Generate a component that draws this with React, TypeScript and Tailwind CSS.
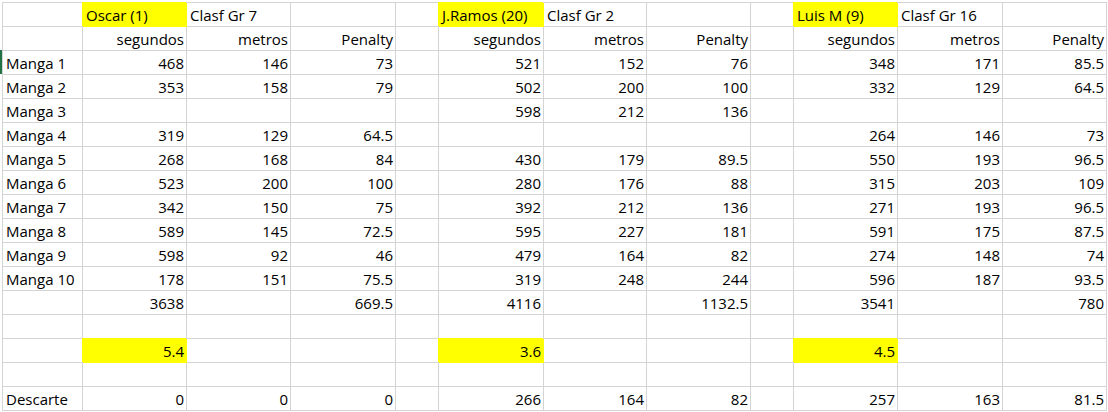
const widths = [
  "w-[80px]",
  "w-[104px]",
  "w-[104px]",
  "w-[105px]",
  "w-[43px]",
  "w-[105px]",
  "w-[103px]",
  "w-[104px]",
  "w-[43px]",
  "w-[104px]",
  "w-[105px]",
  "w-[104px]",
];

const header = ["", "Oscar (1)", "Clasf Gr 7", "", "", "J.Ramos (20)", "Clasf Gr 2", "", "", "Luis M (9)", "Clasf Gr 16", ""];
const units = ["", "segundos", "metros", "Penalty", "", "segundos", "metros", "Penalty", "", "segundos", "metros", "Penalty"];

// segundos / metros / penalty for each player
const mangas: string[][] = [
  ["468", "146", "73", "521", "152", "76", "348", "171", "85.5"],
  ["353", "158", "79", "502", "200", "100", "332", "129", "64.5"],
  ["", "", "", "598", "212", "136", "", "", ""],
  ["319", "129", "64.5", "", "", "", "264", "146", "73"],
  ["268", "168", "84", "430", "179", "89.5", "550", "193", "96.5"],
  ["523", "200", "100", "280", "176", "88", "315", "203", "109"],
  ["342", "150", "75", "392", "212", "136", "271", "193", "96.5"],
  ["589", "145", "72.5", "595", "227", "181", "591", "175", "87.5"],
  ["598", "92", "46", "479", "164", "82", "274", "148", "74"],
  ["178", "151", "75.5", "319", "248", "244", "596", "187", "93.5"],
];

const spread = (label: string, v: string[]) => [label, v[0], v[1], v[2], "", v[3], v[4], v[5], "", v[6], v[7], v[8]];

const yellowCols = [1, 5, 9];

type Row = { cells: string[]; left?: boolean; yellow?: boolean; mark?: boolean };

const rows: Row[] = [
  { cells: header, left: true, yellow: true },
  { cells: units },
  ...mangas.map((m, i) => ({ cells: spread(`Manga ${i + 1}`, m), mark: i === 0 })),
  { cells: spread("", ["3638", "", "669.5", "4116", "", "1132.5", "3541", "", "780"]) },
  { cells: spread("", ["", "", "", "", "", "", "", "", ""]) },
  { cells: spread("", ["5.4", "", "", "3.6", "", "", "4.5", "", ""]), yellow: true },
  { cells: spread("", ["", "", "", "", "", "", "", "", ""]) },
  { cells: spread("Descarte", ["0", "0", "0", "266", "164", "82", "257", "163", "81.5"]) },
];

function Cell({ text, idx, left, yellow }: { text: string; idx: number; left?: boolean; yellow?: boolean }) {
  const alignLeft = left || idx === 0;
  return (
    <div
      className={`${widths[idx]} h-[24px] shrink-0 flex items-end border-r border-b whitespace-nowrap pb-px ${
        yellow ? "bg-[#ffff00] border-[#ffff00] shadow-[-1px_-1px_0_0_#ffff00]" : "border-[#d4d4d4]"
      } ${alignLeft ? "justify-start pl-[3px]" : "justify-end pr-[2px]"}`}
    >
      {text}
    </div>
  );
}

export default function App() {
  return (
    <main className="w-[1108px] h-[412px] overflow-hidden bg-white pt-[2px] text-black text-[15px] leading-[20px] font-['Open_Sans',sans-serif]">
      <div className="ml-[2px] border-t border-l border-[#d4d4d4] w-max">
        {rows.map((row, r) => (
          <div key={r} className="relative flex">
            {row.mark && <div className="absolute -left-[3px] top-[-1px] w-[2px] h-[24px] bg-[#217346]" />}
            {row.cells.map((c, i) => (
              <Cell key={i} text={c} idx={i} left={row.left} yellow={row.yellow && yellowCols.includes(i)} />
            ))}
          </div>
        ))}
      </div>
    </main>
  );
}
